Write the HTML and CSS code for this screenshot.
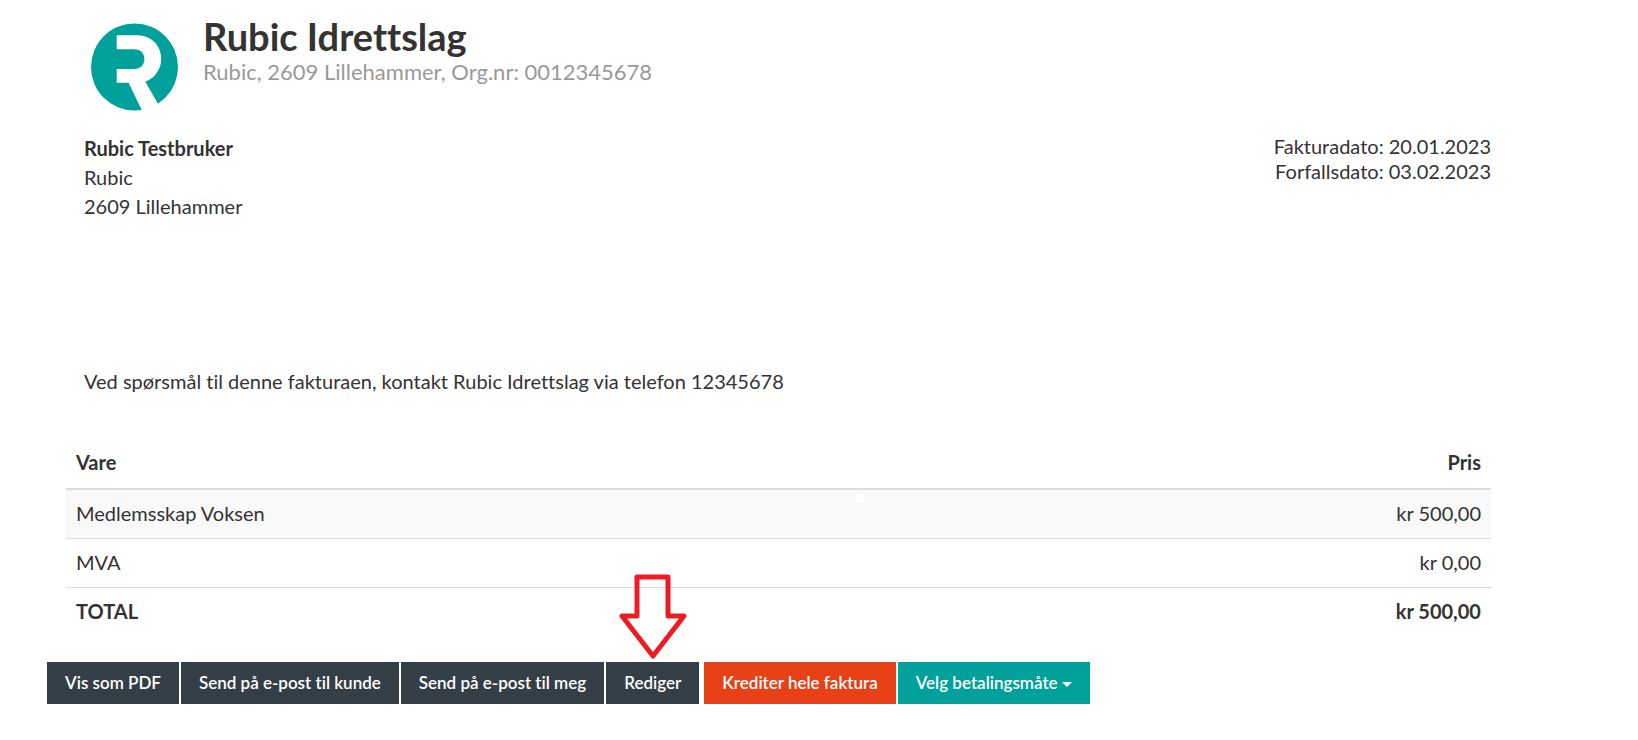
FILE: index.html
```
<!DOCTYPE html>
<html lang="no">
<head>
  <meta charset="UTF-8">
  <meta name="viewport" content="width=device-width, initial-scale=1.0">
  <title>Faktura</title>
  <link rel="stylesheet" href="styles.css">
</head>
<body>

  <main class="invoice">

    <header class="club">
      <svg class="club-logo" viewBox="0 0 88 88" role="img" aria-label="Rubic">
        <circle cx="44" cy="44" r="44" fill="#00a19a"/>
        <path d="M26 12h20c15 0 25 10 25 24 0 10-6 19-16 23l16 28-16 8L38 60H26V46h18c6 0 10-4 10-10s-4-10-10-10H26z" fill="#fff"/>
      </svg>
      <div>
        <h1 class="club-name">Rubic Idrettslag</h1>
        <p class="club-info">Rubic, 2609 Lillehammer, Org.nr: 0012345678</p>
      </div>
    </header>

    <section class="details">
      <address class="customer">
        <strong>Rubic Testbruker</strong><br>
        Rubic<br>
        2609 Lillehammer
      </address>
      <div class="dates">
        Fakturadato: 20.01.2023<br>
        Forfallsdato: 03.02.2023
      </div>
    </section>

    <p class="contact">Ved spørsmål til denne fakturaen, kontakt Rubic Idrettslag via telefon 12345678</p>

    <table class="lines">
      <thead>
        <tr><th scope="col">Vare</th><th scope="col">Pris</th></tr>
      </thead>
      <tbody>
        <tr class="striped"><td>Medlemsskap Voksen</td><td>kr 500,00</td></tr>
        <tr><td>MVA</td><td>kr 0,00</td></tr>
        <tr class="total"><td>TOTAL</td><td>kr 500,00</td></tr>
      </tbody>
    </table>

    <div class="actions">
      <button type="button" class="btn">Vis som PDF</button>
      <button type="button" class="btn">Send på e-post til kunde</button>
      <button type="button" class="btn">Send på e-post til meg</button>
      <div class="pointed">
        <svg class="arrow" viewBox="0 0 68 86" aria-hidden="true">
          <path d="M18 3h31v39h16L34 82 3 42h15z"/>
        </svg>
        <button type="button" class="btn">Rediger</button>
      </div>
      <button type="button" class="btn btn-danger">Krediter hele faktura</button>
      <button type="button" class="btn btn-primary">Velg betalingsmåte <span class="caret"></span></button>
    </div>

  </main>

</body>
</html>
```
FILE: styles.css
```
* {
  box-sizing: border-box;
}

body {
  margin: 0;
  background-color: #fff;
  color: #333;
  font-family: "Proxima Nova", Lato, sans-serif;
  font-size: 20px;
  line-height: 29px;
  font-variant-ligatures: none;
}

.invoice {
  padding: 15px 147px 32px 66px;
}

/* logo and club name */
.club {
  display: flex;
  gap: 25px;
  padding-left: 25px;
}

.club-logo {
  flex: none;
  width: 87px;
  height: 88px;
  margin-top: 8px;
}

.club-name {
  margin: 0;
  font-size: 38px;
  line-height: 42px;
}

.club-info {
  margin: 0;
  color: #999;
  font-size: 22px;
  line-height: 30px;
}

/* customer and dates */
.details {
  display: flex;
  justify-content: space-between;
  min-height: 233px;
  margin-top: 23px;
  padding-left: 18px;
}

.customer {
  font-style: normal;
}

.dates {
  line-height: 25px;
  text-align: right;
}

.contact {
  margin: 0 0 42px;
  padding-left: 18px;
}

/* invoice lines */
.lines {
  width: 100%;
  border-collapse: separate;
  border-spacing: 0;
}

.lines th,
.lines td {
  padding: 10px;
  text-align: left;
}

.lines th {
  padding-bottom: 11px;
  border-bottom: 2px solid #ddd;
}

.lines td {
  padding-top: 9px;
}

.lines td + td,
.lines th + th {
  text-align: right;
}

.lines tr + tr td {
  border-top: 1px solid #ddd;
}

.striped {
  position: relative;
  background-color: #f9f9f9;
}

/* small white square on the striped row */
.striped::after {
  content: "";
  position: absolute;
  top: 3px;
  right: 44%;
  width: 8px;
  height: 9px;
  background-color: #fff;
}

.total {
  font-weight: bold;
}

/* buttons */
.actions {
  display: flex;
  flex-wrap: wrap;
  gap: 2px;
  margin: 26px 0 0 -19px;
}

.btn {
  padding: 8px 18px;
  border: 0;
  background-color: #343e47;
  color: #fff;
  font: 600 17px/26px "Proxima Nova", Lato, sans-serif;
  font-variant-ligatures: none;
  cursor: pointer;
}

.btn-danger {
  background-color: #e84017;
}

.btn-primary {
  background-color: #00a19a;
}

.caret {
  display: inline-block;
  border: 5px solid transparent;
  border-top-color: #fff;
  border-bottom: 0;
  vertical-align: middle;
}

.pointed {
  position: relative;
  margin-right: 3px;
}

/* red arrow over the edit button */
.arrow {
  position: absolute;
  bottom: 100%;
  left: 50%;
  width: 68px;
  height: 86px;
  margin: 0 0 2px -34px;
  fill: none;
  stroke: #ed1c24;
  stroke-width: 5;
  stroke-linejoin: round;
}
```
